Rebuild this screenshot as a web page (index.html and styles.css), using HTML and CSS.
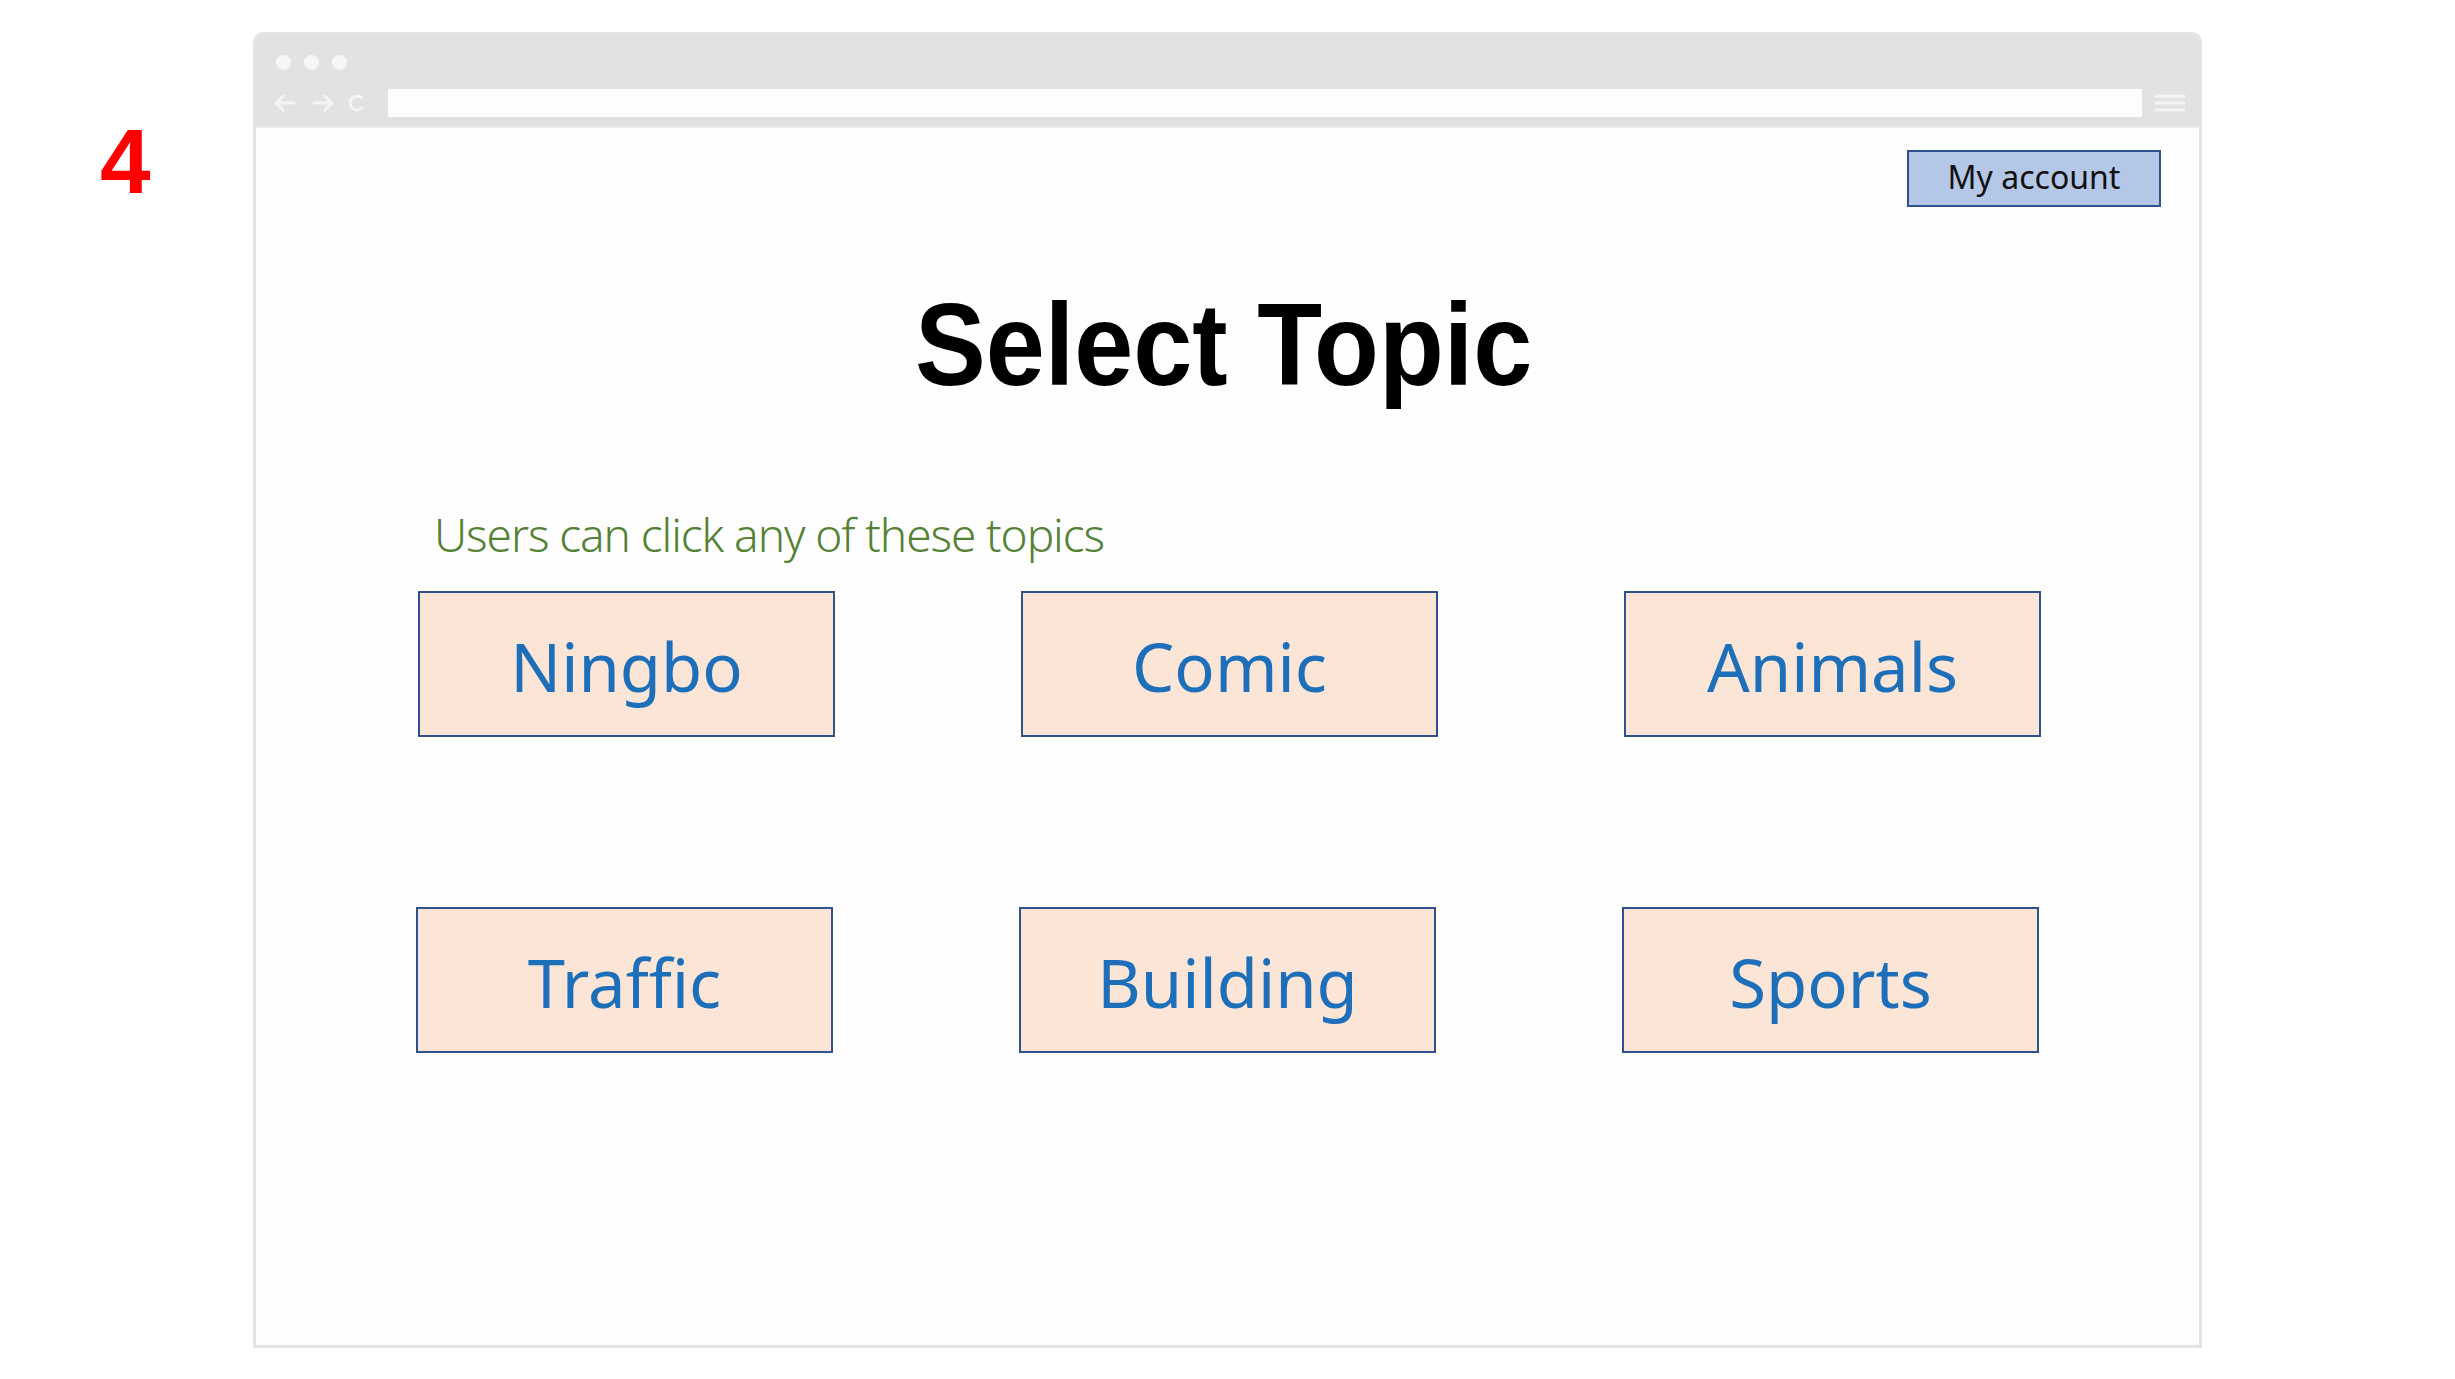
FILE: index.html
```html
<!DOCTYPE html>
<html lang="en">
<head>
<meta charset="utf-8">
<title>Select Topic</title>
<link rel="stylesheet" href="styles.css">
</head>
<body>
<div class="page">
  <div class="step">4</div>
  <div class="browser">
    <div class="chrome">
      <div class="dots"><span class="dot"></span><span class="dot"></span><span class="dot"></span></div>
      <div class="navrow">
        <svg class="nav" width="100" height="28" viewBox="0 0 100 28">
          <g fill="none" stroke="#f4f4f4" stroke-width="3" stroke-linecap="round" stroke-linejoin="round">
            <path d="M28 14 H10 M17 7 L10 14 L17 21"/>
            <path d="M48 14 H66 M59 7 L66 14 L59 21"/>
            <path d="M96 9 A7 7 0 1 0 96 19"/>
          </g>
        </svg>
        <div class="address"></div>
        <svg class="menu" width="34" height="22" viewBox="0 0 34 22">
          <g stroke="#f4f4f4" stroke-width="3"><path d="M2 4 H32 M2 11 H32 M2 18 H32"/></g>
        </svg>
      </div>
    </div>
    <div class="content">
      <div class="topbar"><button class="account">My account</button></div>
      <h1 class="title"><span class="title-text">Select Topic</span></h1>
      <p class="hint">Users can click any of these topics</p>
      <div class="row">
        <div class="topic">Ningbo</div>
        <div class="topic">Comic</div>
        <div class="topic">Animals</div>
      </div>
      <div class="row row-second">
        <div class="topic">Traffic</div>
        <div class="topic">Building</div>
        <div class="topic">Sports</div>
      </div>
    </div>
  </div>
</div>
</body>
</html>
```
FILE: styles.css
```css
html, body {
  margin: 0;
  padding: 0;
  background: #ffffff;
}
body {
  width: 2455px;
  height: 1379px;
  overflow: hidden;
  font-family: "Noto Sans", "Liberation Sans", sans-serif;
}
.page {
  display: flex;
  align-items: flex-start;
  padding-top: 32px;
}
.step {
  width: 153px;
  padding-left: 100px;
  margin-top: 84px;
  font-family: "Liberation Sans", Arial, sans-serif;
  font-weight: bold;
  font-size: 91px;
  line-height: 1;
  color: #ff0000;
}
.browser {
  width: 1943px;
  height: 1310px;
  border: 3px solid #e4e4e4;
  border-radius: 10px 10px 0 0;
  background: #fefefe;
  display: flex;
  flex-direction: column;
}
.chrome {
  height: 93px;
  background: #e2e2e2;
  border-radius: 7px 7px 0 0;
  display: flex;
  flex-direction: column;
  padding: 0 12px 0 10px;
  box-sizing: border-box;
  border-bottom: 2px solid #ececec;
}
.dots {
  display: flex;
  gap: 13px;
  padding-top: 20px;
  padding-left: 10px;
  height: 15px;
}
.dot {
  width: 15px;
  height: 15px;
  border-radius: 50%;
  background: #f6f6f6;
}
.navrow {
  display: flex;
  align-items: center;
  margin-top: 19px;
}
.nav {
  flex: none;
}
.address {
  margin-left: 22px;
  width: 1757px;
  height: 28px;
  background: #fdfdfd;
}
.menu {
  margin-left: 11px;
  flex: none;
}
.content {
  flex: 1;
  display: flex;
  flex-direction: column;
}
.topbar {
  display: flex;
  justify-content: flex-end;
  padding: 22px 38px 0 0;
}
.account {
  width: 254px;
  height: 57px;
  box-sizing: border-box;
  background: #b4c7e7;
  border: 2px solid #2f528f;
  font-family: "Noto Sans", "Liberation Sans", sans-serif;
  font-size: 32px;
  line-height: 1;
  color: #111111;
  padding: 0 0 3px 0;
  margin: 0;
}
.title {
  margin: 79px 0 0 659px;
  font-family: "Liberation Sans", Arial, sans-serif;
  font-weight: bold;
  font-size: 117px;
  line-height: 1;
  height: 114px;
  color: #000000;
}
.title-text {
  display: inline-block;
  white-space: nowrap;
  transform: scaleX(0.907);
  transform-origin: left center;
}
.hint {
  margin: 111px 0 0 178px;
  font-family: "Noto Sans", "Liberation Sans", sans-serif;
  font-weight: 300;
  font-size: 46px;
  letter-spacing: -1.1px;
  line-height: 1;
  color: #548235;
}
.row {
  display: flex;
  gap: 186px;
  margin: 34px 0 0 162px;
}
.row-second {
  margin: 170px 0 0 160px;
}
.topic {
  width: 417px;
  height: 146px;
  box-sizing: border-box;
  border: 2px solid #2f528f;
  background: #fbe5d6;
  display: flex;
  align-items: center;
  justify-content: center;
  font-family: "Noto Sans", "Liberation Sans", sans-serif;
  font-size: 67px;
  line-height: 1;
  color: #1e6fba;
  padding-top: 5px;
}
```
